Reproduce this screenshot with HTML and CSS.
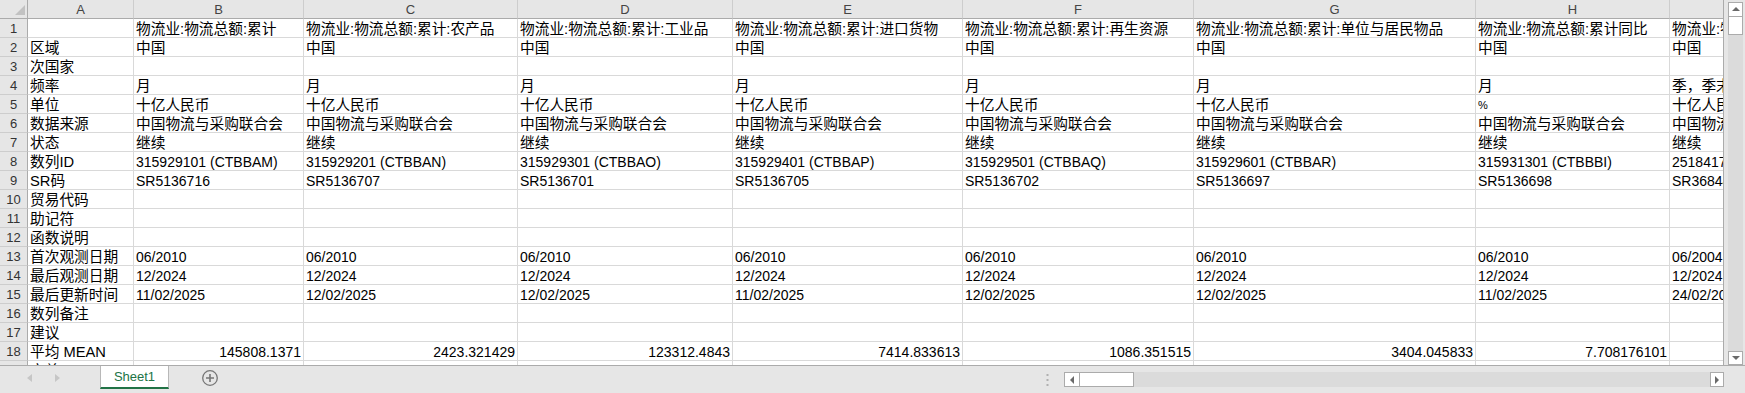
FILE: index.html
```html
<!DOCTYPE html>
<html lang="zh-CN">
<head>
    <meta charset="UTF-8">
    <meta name="viewport" content="width=device-width, initial-scale=1.0">
    <title>Sheet1 - 物流总额</title>
    <link rel="stylesheet" href="styles.css">
</head>
<body>
    <div class="excel">
        <div class="work">
            <div class="grid">
                <table class="sheet">
                    <colgroup>
                        <col class="c-rn">
                        <col class="c-a">
                        <col class="c-b">
                        <col class="c-c">
                        <col class="c-d">
                        <col class="c-e">
                        <col class="c-f">
                        <col class="c-g">
                        <col class="c-h">
                        <col class="c-i">
                    </colgroup>
                    <thead>
                        <tr>
                            <th class="corner"><span class="tri"></span></th>
                            <th>A</th><th>B</th><th>C</th><th>D</th><th>E</th><th>F</th><th>G</th><th>H</th><th>I</th>
                        </tr>
                    </thead>
                    <tbody>
                        <tr>
                            <th>1</th><td></td>
                            <td>物流业:物流总额:累计</td>
                            <td>物流业:物流总额:累计:农产品</td>
                            <td>物流业:物流总额:累计:工业品</td>
                            <td>物流业:物流总额:累计:进口货物</td>
                            <td>物流业:物流总额:累计:再生资源</td>
                            <td>物流业:物流总额:累计:单位与居民物品</td>
                            <td>物流业:物流总额:累计同比</td>
                            <td>物流业:物流总额:当季值</td>
                        </tr>
                        <tr>
                            <th>2</th><td>区域</td>
                            <td>中国</td><td>中国</td><td>中国</td><td>中国</td><td>中国</td><td>中国</td><td>中国</td><td>中国</td>
                        </tr>
                        <tr>
                            <th>3</th><td>次国家</td>
                            <td></td><td></td><td></td><td></td><td></td><td></td><td></td><td></td>
                        </tr>
                        <tr>
                            <th>4</th><td>频率</td>
                            <td>月</td><td>月</td><td>月</td><td>月</td><td>月</td><td>月</td><td>月</td><td>季，季末</td>
                        </tr>
                        <tr>
                            <th>5</th><td>单位</td>
                            <td>十亿人民币</td><td>十亿人民币</td><td>十亿人民币</td><td>十亿人民币</td><td>十亿人民币</td><td>十亿人民币</td><td class="pct">%</td><td>十亿人民币</td>
                        </tr>
                        <tr>
                            <th>6</th><td>数据来源</td>
                            <td>中国物流与采购联合会</td><td>中国物流与采购联合会</td><td>中国物流与采购联合会</td><td>中国物流与采购联合会</td>
                            <td>中国物流与采购联合会</td><td>中国物流与采购联合会</td><td>中国物流与采购联合会</td><td>中国物流与采购联合会</td>
                        </tr>
                        <tr>
                            <th>7</th><td>状态</td>
                            <td>继续</td><td>继续</td><td>继续</td><td>继续</td><td>继续</td><td>继续</td><td>继续</td><td>继续</td>
                        </tr>
                        <tr class="num">
                            <th>8</th><td>数列ID</td>
                            <td>315929101 (CTBBAM)</td><td>315929201 (CTBBAN)</td><td>315929301 (CTBBAO)</td><td>315929401 (CTBBAP)</td>
                            <td>315929501 (CTBBAQ)</td><td>315929601 (CTBBAR)</td><td>315931301 (CTBBBI)</td><td>251841701 (CTBAAB)</td>
                        </tr>
                        <tr class="num">
                            <th>9</th><td>SR码</td>
                            <td>SR5136716</td><td>SR5136707</td><td>SR5136701</td><td>SR5136705</td>
                            <td>SR5136702</td><td>SR5136697</td><td>SR5136698</td><td>SR3684426</td>
                        </tr>
                        <tr>
                            <th>10</th><td>贸易代码</td>
                            <td></td><td></td><td></td><td></td><td></td><td></td><td></td><td></td>
                        </tr>
                        <tr>
                            <th>11</th><td>助记符</td>
                            <td></td><td></td><td></td><td></td><td></td><td></td><td></td><td></td>
                        </tr>
                        <tr>
                            <th>12</th><td>函数说明</td>
                            <td></td><td></td><td></td><td></td><td></td><td></td><td></td><td></td>
                        </tr>
                        <tr class="num">
                            <th>13</th><td>首次观测日期</td>
                            <td>06/2010</td><td>06/2010</td><td>06/2010</td><td>06/2010</td><td>06/2010</td><td>06/2010</td><td>06/2010</td><td>06/2004</td>
                        </tr>
                        <tr class="num">
                            <th>14</th><td>最后观测日期</td>
                            <td>12/2024</td><td>12/2024</td><td>12/2024</td><td>12/2024</td><td>12/2024</td><td>12/2024</td><td>12/2024</td><td>12/2024</td>
                        </tr>
                        <tr class="num">
                            <th>15</th><td>最后更新时间</td>
                            <td>11/02/2025</td><td>12/02/2025</td><td>12/02/2025</td><td>11/02/2025</td>
                            <td>12/02/2025</td><td>12/02/2025</td><td>11/02/2025</td><td>24/02/2025</td>
                        </tr>
                        <tr>
                            <th>16</th><td>数列备注</td>
                            <td></td><td></td><td></td><td></td><td></td><td></td><td></td><td></td>
                        </tr>
                        <tr>
                            <th>17</th><td>建议</td>
                            <td></td><td></td><td></td><td></td><td></td><td></td><td></td><td></td>
                        </tr>
                        <tr class="num">
                            <th>18</th><td>平均 MEAN</td>
                            <td class="r">145808.1371</td><td class="r">2423.321429</td><td class="r">123312.4843</td><td class="r">7414.833613</td>
                            <td class="r">1086.351515</td><td class="r">3404.045833</td><td class="r">7.708176101</td><td class="r"></td>
                        </tr>
                        <tr>
                            <th>19</th><td>方差</td>
                            <td></td><td></td><td></td><td></td><td></td><td></td><td></td><td></td>
                        </tr>
                    </tbody>
                </table>
            </div>

            <!-- 세로 스크롤바 -->
            <div class="vscroll">
                <div class="vtrack">
                    <div class="sbtn"><span class="arr up"></span></div>
                    <div class="vthumb"></div>
                    <div class="vspace"></div>
                    <div class="sbtn down-btn"><span class="arr down"></span></div>
                </div>
            </div>
        </div>

        <div class="tabbar">
            <div class="tab-nav">
                <span class="nav-arr nav-left"></span>
                <span class="nav-arr nav-right"></span>
            </div>
            <div class="tab">Sheet1</div>
            <svg class="add" width="18" height="18" viewBox="0 0 18 18">
                <circle cx="9" cy="9" r="7.3" fill="none" stroke="#767676" stroke-width="1.3"/>
                <path d="M9 5v8M5 9h8" stroke="#767676" stroke-width="1.6"/>
            </svg>
            <svg class="dots" width="3" height="14" viewBox="0 0 3 14">
                <rect x="0.5" y="1" width="2" height="2" fill="#b0b0b0"/>
                <rect x="0.5" y="6" width="2" height="2" fill="#b0b0b0"/>
                <rect x="0.5" y="11" width="2" height="2" fill="#b0b0b0"/>
            </svg>
            <div class="hscroll">
                <div class="sbtn hbtn-left"><span class="arr left"></span></div>
                <div class="hthumb"></div>
                <div class="hspace"></div>
                <div class="sbtn hbtn-right"><span class="arr right"></span></div>
            </div>
        </div>
    </div>
</body>
</html>
```

FILE: styles.css
```css
:root {
    --grid-line: #d9d9d9;
    --head-line: #cdcdcd;
    --edge-line: #ababab;
    --head-bg: #e6e6e6;
    --bar-bg: #e6e6e6;
    --track: #dbdbdb;
    --green: #217346;
}

* {
    margin: 0;
    padding: 0;
    box-sizing: border-box;
}

body {
    width: 1745px;
    height: 393px;
    overflow: hidden;
    background-color: var(--bar-bg);
    font-family: 'Liberation Sans', 'Noto Sans CJK SC', sans-serif;
    color: #000;
}

.excel {
    display: flex;
    flex-direction: column;
    height: 393px;
}

.work {
    display: flex;
    height: 365px;
}

.grid {
    width: 1724px;
    height: 365px;
    overflow: hidden;
    background-color: #fff;
    border-right: 1px solid var(--edge-line);
}

.sheet {
    table-layout: fixed;
    width: 1870px;
    border-collapse: separate;
    border-spacing: 0;
}

.c-rn { width: 28px; }
.c-a { width: 106px; }
.c-b { width: 170px; }
.c-c { width: 214px; }
.c-d { width: 215px; }
.c-e { width: 230px; }
.c-f { width: 231px; }
.c-g { width: 282px; }
.c-h { width: 194px; }
.c-i { width: 200px; }

.sheet td,
.sheet th {
    height: 19px;
    padding: 2px 2px 0 2px;
    line-height: 16px;
    white-space: nowrap;
    overflow: hidden;
    vertical-align: top;
    text-align: left;
    font-weight: normal;
}

.sheet td {
    font-size: 14.7px;
    border-right: 1px solid var(--grid-line);
    border-bottom: 1px solid var(--grid-line);
}

.sheet .num td:not(:first-of-type) {
    font-size: 14px;
}

.sheet td.r {
    text-align: right;
}

.sheet td.pct {
    font-size: 11px;
}

/* 열/행 머리글 */
.sheet thead th {
    background-color: var(--head-bg);
    color: #444;
    font-size: 13px;
    text-align: center;
    border-right: 1px solid var(--head-line);
    border-bottom: 1px solid var(--edge-line);
}

.sheet tbody th {
    background-color: var(--head-bg);
    color: #333;
    font-size: 13px;
    text-align: center;
    padding: 2px 0 0 0;
    border-right: 1px solid var(--edge-line);
    border-bottom: 1px solid var(--head-line);
}

.sheet thead th.corner {
    padding: 5px 0 0 15px;
    border-right: 1px solid var(--edge-line);
}

.tri {
    display: block;
    width: 0;
    height: 0;
    border-left: 10px solid transparent;
    border-bottom: 10px solid #c2c2c2;
}

/* 스크롤바 */
.vscroll {
    width: 21px;
    height: 365px;
    padding: 2px 0 0 4px;
}

.vtrack {
    width: 15px;
    height: 100%;
    display: flex;
    flex-direction: column;
    background-color: var(--track);
}

.sbtn {
    display: flex;
    align-items: center;
    justify-content: center;
    width: 15px;
    height: 15px;
    background-color: #fff;
    border: 1px solid var(--edge-line);
    flex-shrink: 0;
}

.down-btn {
    height: 14px;
}

.vthumb {
    height: 18px;
    background-color: #fff;
    border: 1px solid var(--edge-line);
    border-top: none;
}

.vspace,
.hspace {
    flex: 1;
}

.arr {
    width: 0;
    height: 0;
    border: 4px solid transparent;
}

.arr.up {
    border-bottom: 4px solid #6a6a6a;
    border-top-width: 0;
    margin-top: -1px;
}

.arr.down {
    border-top: 4px solid #6a6a6a;
    border-bottom-width: 0;
}

.arr.left {
    border-right: 4px solid #6a6a6a;
    border-left-width: 0;
}

.arr.right {
    border-left: 4px solid #6a6a6a;
    border-right-width: 0;
}

/* 시트 탭 영역 */
.tabbar {
    height: 28px;
    display: flex;
    align-items: flex-start;
    border-top: 1px solid var(--edge-line);
    background-color: var(--bar-bg);
}

.tab-nav {
    width: 100px;
    display: flex;
    gap: 23px;
    padding: 8px 0 0 27px;
}

.nav-arr {
    width: 0;
    height: 0;
    border-top: 4px solid transparent;
    border-bottom: 4px solid transparent;
}

.nav-left {
    border-right: 5px solid #c6c6c6;
}

.nav-right {
    border-left: 5px solid #c6c6c6;
}

.tab {
    width: 69px;
    height: 23px;
    padding-top: 1px;
    background-color: #fff;
    border-left: 1px solid #b8b8b8;
    border-right: 1px solid #b8b8b8;
    border-bottom: 2px solid var(--green);
    color: var(--green);
    font-size: 13px;
    line-height: 20px;
    text-align: center;
}

.add {
    margin: 3px 0 0 32px;
}

.dots {
    margin: 7px 15px 0 auto;
}

.hscroll {
    width: 660px;
    height: 15px;
    margin: 6px 21px 0 0;
    display: flex;
    background-color: var(--track);
}

.hbtn-left {
    width: 16px;
}

.hthumb {
    width: 54px;
    background-color: #fff;
    border: 1px solid var(--edge-line);
    border-left: none;
}

.hbtn-right {
    width: 14px;
}
```
